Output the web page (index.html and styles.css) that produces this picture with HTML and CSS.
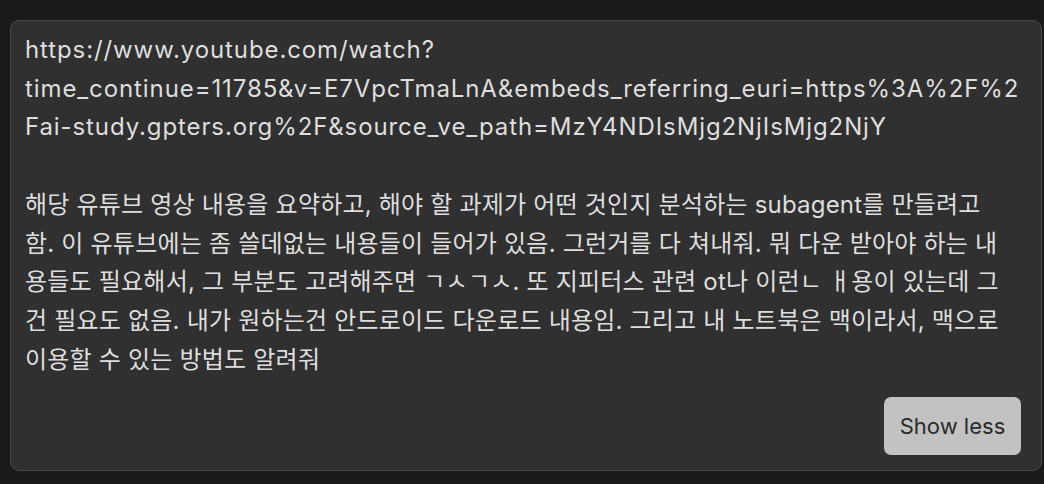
FILE: index.html
```html
<!DOCTYPE html>
<html lang="ko">
<head>
<meta charset="utf-8">
<link rel="stylesheet" href="styles.css">
</head>
<body>
<div class="card">
  <div class="message">
    <p class="url">https://www.youtube.com/watch?time_continue=11785&amp;v=E7VpcTmaLnA&amp;embeds_referring_euri=https%3A%2F%2Fai-study.gpters.org%2F&amp;source_ve_path=MzY4NDIsMjg2NjIsMjg2NjY</p>
    <p class="prompt">해당 유튜브 영상 내용을 요약하고, 해야 할 과제가 어떤 것인지 분석하는 subagent를 만들려고<br>함. 이 유튜브에는 좀 쓸데없는 내용들이 들어가 있음. 그런거를 다 쳐내줘. 뭐 다운 받아야 하는 내<br>용들도 필요해서, 그 부분도 고려해주면 ㄱㅅㄱㅅ. 또 지피터스 관련 ot나 이런ㄴ ㅐ용이 있는데 그<br>건 필요도 없음. 내가 원하는건 안드로이드 다운로드 내용임. 그리고 내 노트북은 맥이라서, 맥으로<br>이용할 수 있는 방법도 알려줘</p>
  </div>
  <div class="actions">
    <button class="toggle">Show less</button>
  </div>
</div>
</body>
</html>
```

FILE: styles.css
```css
html, body {
  margin: 0;
  padding: 0;
  background: #1a1a1a;
}
body {
  padding: 20px 2px 13px 10px;
  font-family: "Inter", "Noto Sans CJK KR", sans-serif;
}
.card {
  background: #303030;
  border: 1px solid #484848;
  border-radius: 9px;
  height: 451px;
  box-sizing: border-box;
  padding: 10px 16px 15px 14px;
  display: flex;
  flex-direction: column;
}
.message {
  color: #dedede;
  font-size: 24px;
  line-height: 38.7px;
}
.message p {
  margin: 0;
}
.url {
  letter-spacing: 0.9px;
  overflow-wrap: anywhere;
}
.message .prompt {
  margin-top: 38.7px;
  letter-spacing: 0.2px;
  white-space: nowrap;
}
.actions {
  margin-top: auto;
  display: flex;
  justify-content: flex-end;
  padding-right: 4px;
}
.toggle {
  font-family: "Inter", "Noto Sans CJK KR", sans-serif;
  font-size: 22px;
  color: #2a2a2a;
  background: #c2c2c2;
  border: none;
  border-radius: 7px;
  width: 137px;
  height: 58px;
  padding: 0;
}
```
